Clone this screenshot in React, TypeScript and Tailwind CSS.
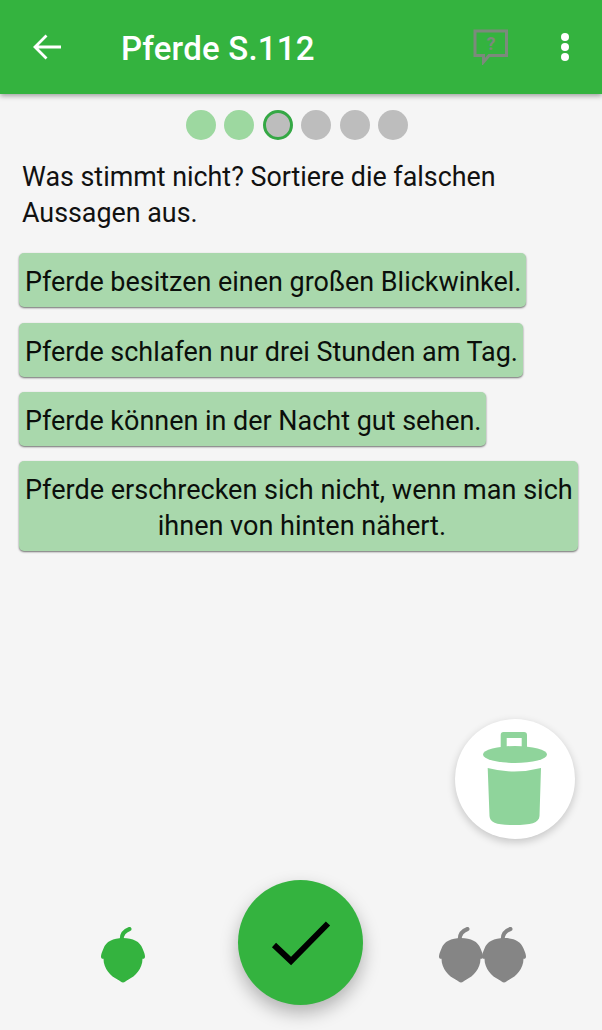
import React from "react";

const Acorn = ({ fill, className }: { fill: string; className: string }) => (
  <svg viewBox="0 0 44 56" className={className} fill={fill}>
    <path d="M20.7 13 C20.5 8 23.5 3.8 28.5 2" fill="none" stroke={fill} strokeWidth="4" strokeLinecap="round" />
    <path d="M22 11 C32 11 39 14.5 41.5 21.5 C43 25 44 27.5 44 29.5 C44 31.5 43 32 41.5 31.8 C41.5 42 34 49.5 27.5 52.5 C25 53.7 23.5 55.5 22 55.5 C20.5 55.5 19 53.7 16.5 52.5 C10 49.5 2.5 42 2.5 31.8 C1 32 0 31.5 0 29.5 C0 27.5 1 25 2.5 21.5 C5 14.5 12 11 22 11 Z" />
  </svg>
);

const Option = ({ children, size }: { children: React.ReactNode; size: string }) => (
  <div className={`max-w-[560px] rounded-[5px] bg-[#a9d8ac] pb-[7px] pl-[6px] pr-[5px] pt-[11px] text-center ${size} leading-[36px] text-[#0b0f0b] shadow-[0_1px_2px_rgba(0,0,0,0.55)]`}>
    {children}
  </div>
);

export default function App() {
  return (
    <div className="relative flex h-[1030px] w-[602px] flex-col overflow-hidden bg-[#f5f5f5] font-['Roboto',sans-serif]">
      <header className="flex h-[94px] shrink-0 items-center bg-[#34b33f] shadow-[0_2px_5px_rgba(0,0,0,0.35)]">
        <svg viewBox="0 0 30 30" className="ml-[32px] h-[30px] w-[30px]" fill="none" stroke="#fff" strokeWidth="2.8">
          <path d="M29 15 H3 M14.5 3.5 L3 15 L14.5 26.5" />
        </svg>
        <h1 className="ml-[59px] mt-[2px] text-[33px] font-medium leading-none tracking-[0.2px] text-white">Pferde S.112</h1>
        <svg viewBox="0 0 36 36" className="ml-auto h-[36px] w-[36px]" fill="none">
          <path d="M2 2 H33.5 V26.5 H16 L10.5 33 V26.5 H2 Z" stroke="#7c8a7c" strokeWidth="3" />
          <text x="18" y="20.5" textAnchor="middle" fontSize="18" fontWeight="700" fontFamily="Roboto, sans-serif" fill="#7c8a7c">?</text>
        </svg>
        <div className="ml-[52px] mr-[33px] flex flex-col gap-[2px]">
          <span className="h-[8px] w-[8px] rounded-full bg-white" />
          <span className="h-[8px] w-[8px] rounded-full bg-white" />
          <span className="h-[8px] w-[8px] rounded-full bg-white" />
        </div>
      </header>

      <div className="mt-[16px] flex justify-center gap-[8.4px] pr-[8px]">
        <span className="h-[30px] w-[30px] rounded-full bg-[#9dd8a0]" />
        <span className="h-[30px] w-[30px] rounded-full bg-[#9dd8a0]" />
        <span className="h-[30px] w-[30px] rounded-full border-[3px] border-[#35a845] bg-[#bdbdbd]" />
        <span className="h-[30px] w-[30px] rounded-full bg-[#bdbdbd]" />
        <span className="h-[30px] w-[30px] rounded-full bg-[#bdbdbd]" />
        <span className="h-[30px] w-[30px] rounded-full bg-[#bdbdbd]" />
      </div>

      <p className="ml-[22px] mt-[19px] w-[540px] text-[26.85px] leading-[36px] text-[#111]">
        Was stimmt nicht? Sortiere die falschen Aussagen aus.
      </p>

      <div className="ml-[19px] mt-[22.4px] flex flex-col items-start gap-[15.3px]">
        <Option size="text-[26.95px]">Pferde besitzen einen großen Blickwinkel.</Option>
        <Option size="text-[26.95px]">Pferde schlafen nur drei Stunden am Tag.</Option>
        <Option size="text-[26.95px]">Pferde können in der Nacht gut sehen.</Option>
        <Option size="text-[27.05px]">
          Pferde erschrecken sich nicht, wenn man sich
          <br />
          <span className="ml-[6px]">ihnen von hinten nähert.</span>
        </Option>
      </div>

      <div className="absolute left-[455px] top-[719px] flex h-[120px] w-[120px] items-center justify-center rounded-full bg-white shadow-[0_3px_8px_rgba(0,0,0,0.2)]">
        <svg viewBox="0 0 64 94" className="h-[94px] w-[64px]" fill="#8fd49b">
          <path fillRule="evenodd" d="M20.5 0 H41 Q44 0 44 3 V16 H38.7 V6 H23.7 V16 H17.7 V3 Q17.7 0 20.5 0 Z" />
          <ellipse cx="32" cy="22.5" rx="32" ry="8.5" />
          <path d="M4.7 36 Q31 43 58 36 L56.5 84 C56 91 48 93 31 93 C14 93 7 91 6.5 84 Z" />
        </svg>
      </div>

      <div className="absolute bottom-[25px] left-0 flex w-full items-center">
        <Acorn fill="#34b33f" className="ml-[101px] mt-[24px] h-[56px] w-[44px]" />
        <div className="relative ml-[93px] flex h-[125px] w-[125px] items-center justify-center rounded-full bg-[#34b33f] shadow-[0_8px_18px_rgba(0,0,0,0.28)]">
          <svg viewBox="0 0 60 46" className="ml-[1px] h-[46px] w-[60px]" fill="none" stroke="#000" strokeWidth="6">
            <path d="M3 25 L20 41 L57 3.5" />
          </svg>
        </div>
        <div className="ml-[76px] mt-[25px] flex">
          <Acorn fill="#858585" className="h-[56px] w-[44px]" />
          <Acorn fill="#858585" className="-ml-[1px] h-[56px] w-[44px]" />
        </div>
      </div>
    </div>
  );
}
